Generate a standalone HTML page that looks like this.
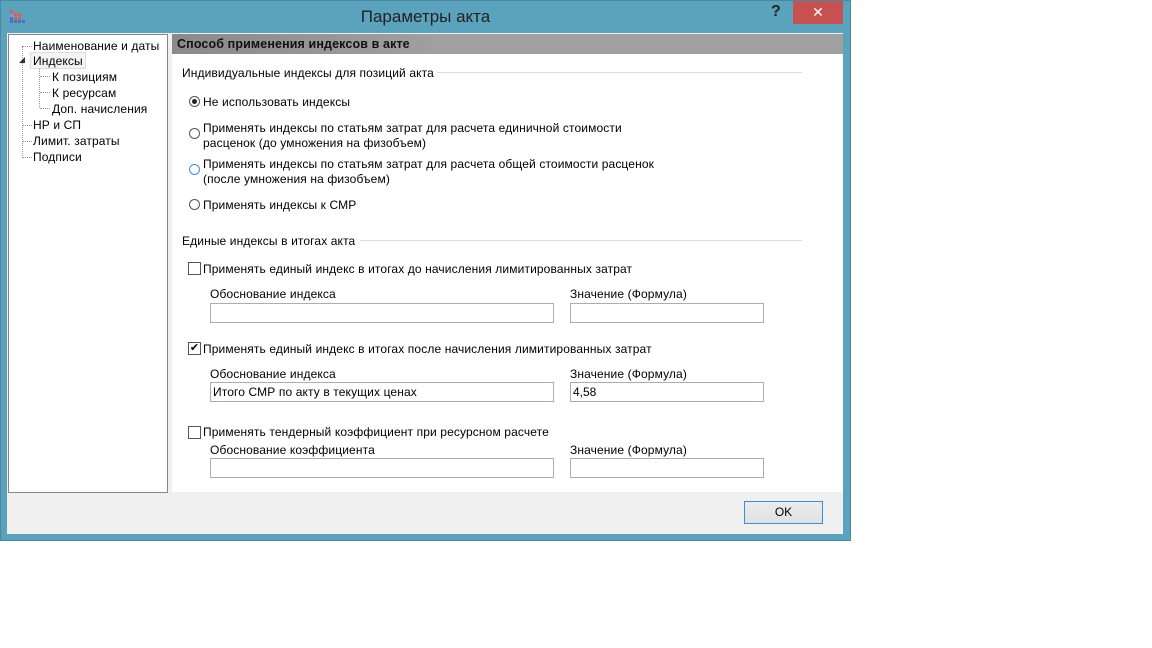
<!DOCTYPE html>
<html><head><meta charset="utf-8"><style>
body{margin:0;width:1152px;height:648px;background:#fff;position:relative;overflow:hidden;font-family:"Liberation Sans","DejaVu Sans",sans-serif;font-size:12px;color:#000}
.a{position:absolute;white-space:nowrap}
.win{position:absolute;left:0;top:0;width:849px;height:539px;background:#5ba3bc;border:1px solid #4a8aa0}
.in{border:1px solid #abadb3;background:#fff;height:20px;box-sizing:border-box;padding:3px 2px;line-height:12px}
.rb{width:11px;height:11px;border:1px solid #555;border-radius:50%;box-sizing:border-box;background:#fff}
.cb{width:13px;height:13px;border:1px solid #555;box-sizing:border-box;background:#fff}
.sep{height:1px;background:#d5dfe5}
.t{letter-spacing:0.12px}
.r{width:3px;height:3px;background:#e8584a;position:absolute}
.b{width:3px;height:3px;background:#4a6fc8;position:absolute}
</style></head><body>
<div class="win"></div>
<!-- icon -->
<div class="a" style="left:10px;top:10px;width:16px;height:14px">
<div class="r" style="left:0;top:0"></div>
<div class="r" style="left:4px;top:3px"></div><div class="r" style="left:8px;top:3px"></div>
<div class="r" style="left:4px;top:7px"></div><div class="r" style="left:8px;top:7px"></div>
<div class="b" style="left:0;top:4px;background:#7a9be0"></div>
<div class="b" style="left:0;top:7px"></div>
<div class="b" style="left:0;top:10px"></div><div class="b" style="left:4px;top:10px"></div><div class="b" style="left:8px;top:10px"></div><div class="b" style="left:12px;top:10px"></div>
</div>
<div class="a" style="left:0;width:851px;text-align:center;top:7px;font-size:17px;color:#222">Параметры акта</div>
<div class="a" style="left:771px;top:3px;font-size:16px;font-weight:bold;color:#222">?</div>
<div class="a" style="left:793px;top:1px;width:50px;height:23px;background:#c75050;color:#fff;text-align:center;font-weight:bold;font-size:14px;line-height:22px">✕</div>
<!-- client -->
<div class="a" style="left:7px;top:33px;width:836px;height:501px;background:#f0f0f0"></div>
<div class="a" style="left:8px;top:34px;width:158px;height:457px;background:#fff;border:1px solid #828790"></div>
<div class="a" style="left:172px;top:34px;width:671px;height:458px;background:#fff"></div>
<div class="a" style="left:172px;top:34px;width:671px;height:20px;background:linear-gradient(90deg,#8a8a8a,#a0a0a0 40%,#a0a0a0)"></div>
<div class="a t" style="left:177px;top:37px;font-weight:bold;font-size:12.5px;color:#111">Способ применения индексов в акте</div>
<!-- tree -->
<div class="a" style="left:22px;top:46px;width:0;height:112px;border-left:1px dotted #999"></div>
<div class="a" style="left:39px;top:68px;width:0;height:40px;border-left:1px dotted #999"></div>
<div class="a" style="left:23px;top:46px;width:9px;border-top:1px dotted #999"></div>
<div class="a" style="left:23px;top:125px;width:9px;border-top:1px dotted #999"></div>
<div class="a" style="left:23px;top:141px;width:9px;border-top:1px dotted #999"></div>
<div class="a" style="left:23px;top:157px;width:9px;border-top:1px dotted #999"></div>
<div class="a" style="left:40px;top:76px;width:10px;border-top:1px dotted #999"></div>
<div class="a" style="left:40px;top:92px;width:10px;border-top:1px dotted #999"></div>
<div class="a" style="left:40px;top:108px;width:10px;border-top:1px dotted #999"></div>
<div class="a" style="left:19px;top:57px;width:0;height:0;border-left:6px solid transparent;border-bottom:6px solid #333"></div>
<div class="a" style="left:30px;top:52px;width:54px;height:15px;background:#f3f3f3;border:1px solid #ddd"></div>
<div class="a t" style="left:33px;top:39px">Наименование и даты</div>
<div class="a t" style="left:33px;top:54px">Индексы</div>
<div class="a t" style="left:52px;top:70px">К позициям</div>
<div class="a t" style="left:52px;top:86px">К ресурсам</div>
<div class="a t" style="left:52px;top:102px">Доп. начисления</div>
<div class="a t" style="left:33px;top:118px">НР и СП</div>
<div class="a t" style="left:33px;top:134px">Лимит. затраты</div>
<div class="a t" style="left:33px;top:150px">Подписи</div>
<!-- right content -->
<div class="a t" style="left:182px;top:66px">Индивидуальные индексы для позиций акта</div>
<div class="a sep" style="left:437px;top:72px;width:365px"></div>
<div class="a rb" style="left:189px;top:96px"></div><div class="a" style="left:192px;top:99px;width:5px;height:5px;border-radius:50%;background:#222"></div>
<div class="a t" style="left:203px;top:95px">Не использовать индексы</div>
<div class="a rb" style="left:189px;top:128px"></div>
<div class="a t" style="left:203px;top:121px;line-height:15px">Применять индексы по статьям затрат для расчета единичной стоимости<br>расценок (до умножения на физобъем)</div>
<div class="a rb" style="left:189px;top:164px;border-color:#3c8fd8"></div>
<div class="a t" style="left:203px;top:157px;line-height:15px">Применять индексы по статьям затрат для расчета общей стоимости расценок<br>(после умножения на физобъем)</div>
<div class="a rb" style="left:189px;top:199px"></div>
<div class="a t" style="left:203px;top:198px">Применять индексы к СМР</div>
<div class="a t" style="left:182px;top:234px">Единые индексы в итогах акта</div>
<div class="a sep" style="left:360px;top:240px;width:442px"></div>
<div class="a cb" style="left:188px;top:262px"></div>
<div class="a t" style="left:203px;top:262px">Применять единый индекс в итогах до начисления лимитированных затрат</div>
<div class="a t" style="left:210px;top:287px">Обоснование индекса</div>
<div class="a t" style="left:570px;top:287px">Значение (Формула)</div>
<div class="a in" style="left:210px;top:303px;width:344px"></div>
<div class="a in" style="left:570px;top:303px;width:194px"></div>
<div class="a cb" style="left:188px;top:342px;font-size:11px;line-height:11px;text-align:center;font-weight:bold">✔</div>
<div class="a t" style="left:203px;top:342px">Применять единый индекс в итогах после начисления лимитированных затрат</div>
<div class="a t" style="left:210px;top:367px">Обоснование индекса</div>
<div class="a t" style="left:570px;top:367px">Значение (Формула)</div>
<div class="a in t" style="left:210px;top:382px;width:344px">Итого СМР по акту в текущих ценах</div>
<div class="a in" style="left:570px;top:382px;width:194px">4,58</div>
<div class="a cb" style="left:188px;top:426px"></div>
<div class="a t" style="left:203px;top:425px">Применять тендерный коэффициент при ресурсном расчете</div>
<div class="a t" style="left:210px;top:443px">Обоснование коэффициента</div>
<div class="a t" style="left:570px;top:443px">Значение (Формула)</div>
<div class="a in" style="left:210px;top:458px;width:344px"></div>
<div class="a in" style="left:570px;top:458px;width:194px"></div>
<div class="a" style="left:744px;top:501px;width:79px;height:23px;box-sizing:border-box;border:1px solid #3c8fd8;background:linear-gradient(#ececec,#e1e1e1);text-align:center;line-height:21px">OK</div>
</body></html>
